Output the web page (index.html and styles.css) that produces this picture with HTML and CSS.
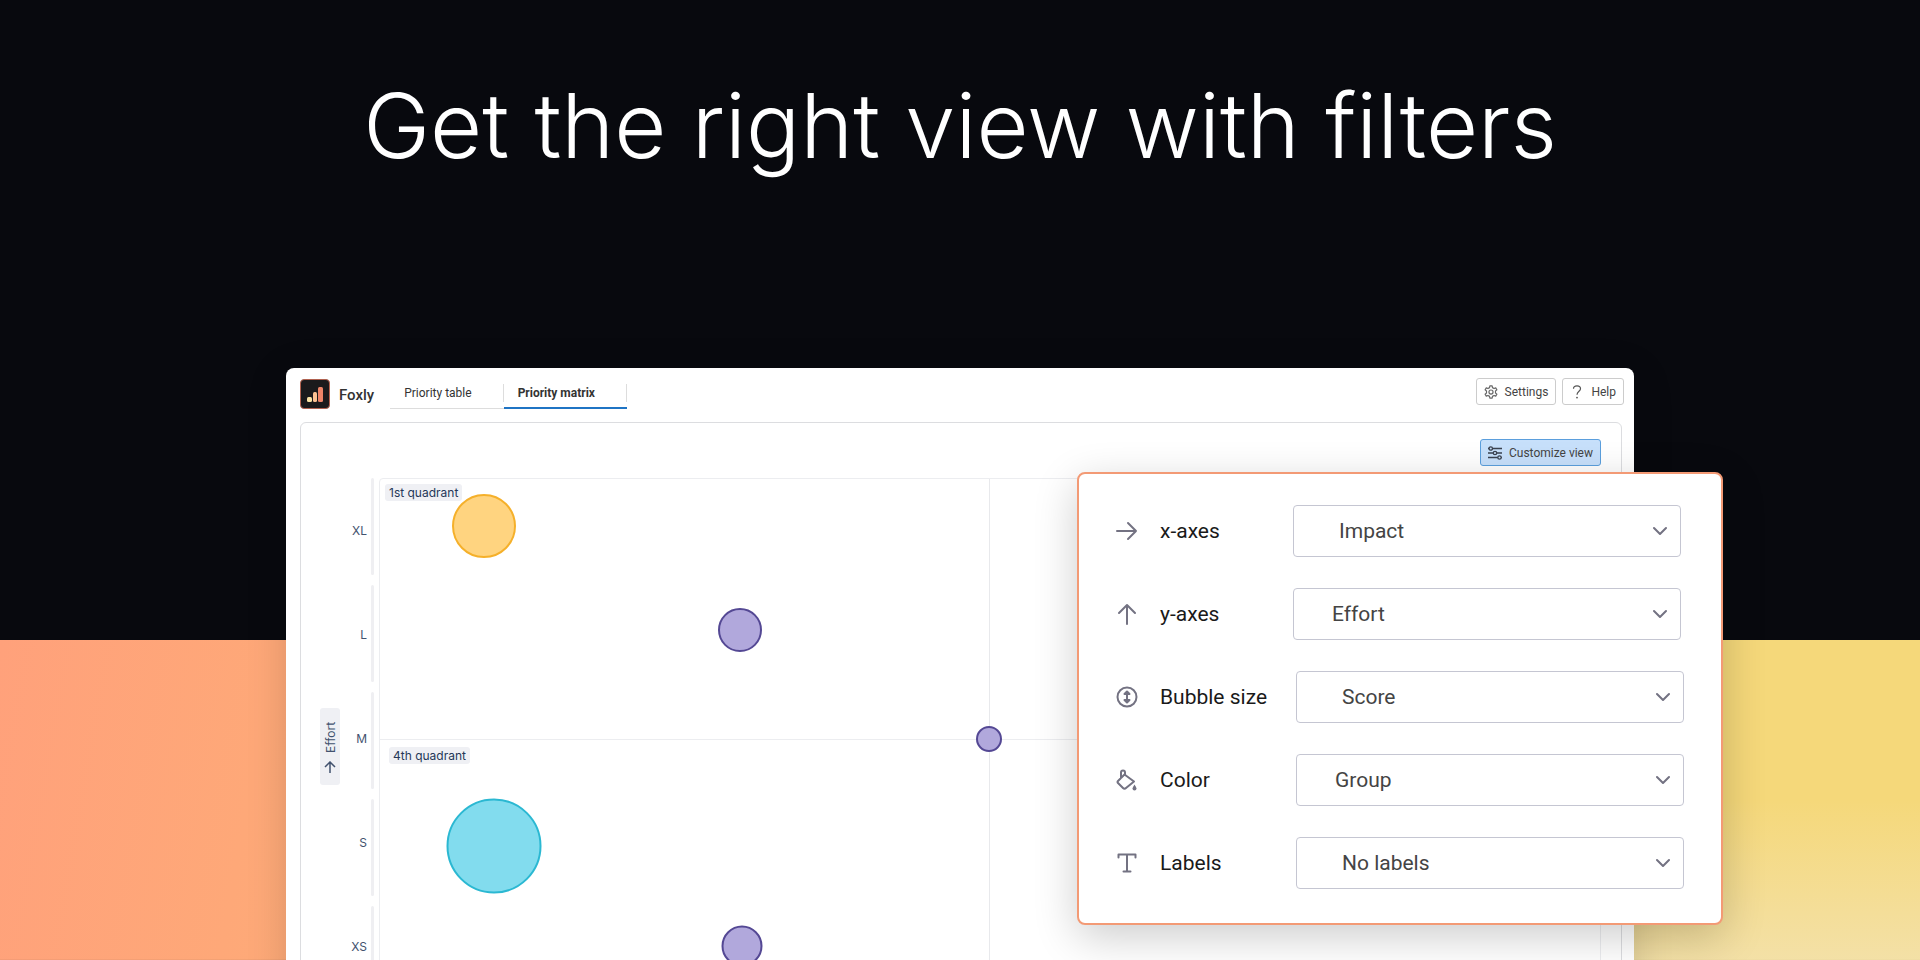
FILE: index.html
```html
<!DOCTYPE html>
<html lang="en">
<head>
    <meta charset="UTF-8">
    <meta name="viewport" content="width=device-width, initial-scale=1.0">
    <title>Foxly - Priority matrix</title>
    <link rel="stylesheet" href="styles.css">
</head>
<body>
    <header class="hero">
        <h1>Get the right view with filters</h1>
    </header>

    <main class="window">
        <!-- Top bar -->
        <div class="topbar">
            <svg class="logo" viewBox="0 0 30 30" aria-hidden="true">
                <rect x="0.5" y="0.5" width="29" height="29" rx="3.5" fill="#1b1a1c" stroke="#b0614f"/>
                <rect x="7" y="18" width="5" height="5" rx="1.5" fill="#fbe3a4"/>
                <rect x="13" y="13" width="4" height="10" rx="1.5" fill="#fbc193"/>
                <rect x="18" y="8" width="5" height="15" rx="1.5" fill="#ee8468"/>
            </svg>
            <span class="brand">Foxly</span>
            <nav class="tabs">
                <a href="#table">Priority table</a>
                <a href="#matrix" class="active">Priority matrix</a>
            </nav>
            <div class="actions">
                <button type="button" class="btn">
                    <svg width="14" height="14" viewBox="0 0 24 24" fill="none" stroke="#666" stroke-width="2" stroke-linejoin="round" aria-hidden="true">
                        <path d="M9.5 4.5 10 1.5h4l.5 3 2.7 1.6 2.9-1.1 2 3.4-2.4 2v3.2l2.4 2-2 3.4-2.9-1.1-2.7 1.6-.5 3h-4l-.5-3-2.7-1.6L3.900 19l-2-3.400 2.400-2v-3.200l-2.400-2L3.900 5l2.900 1.100z"/>
                        <circle cx="12" cy="12" r="3.5"/>
                    </svg>
                    Settings
                </button>
                <button type="button" class="btn">
                    <svg width="14" height="14" viewBox="0 0 14 14" fill="none" stroke="#555" stroke-width="1.2" aria-hidden="true">
                        <path d="M3.5 3.8C3.5 1.8 5 .8 7 .8s3.5 1.2 3.5 3C10.5 6.2 7 6.4 7 9.8"/>
                        <circle cx="7" cy="12.6" r=".9" fill="#555" stroke="none"/>
                    </svg>
                    Help
                </button>
            </div>
        </div>

        <!-- Matrix -->
        <section class="board">
            <div class="toolbar">
                <button type="button" class="btn btn-primary">
                    <svg width="14" height="14" viewBox="0 0 14 14" fill="none" stroke="#3a4250" stroke-width="1.3" aria-hidden="true">
                        <path d="M0 2.5h1M4.6 2.5H14M0 7h5.2M8.8 7H14M0 11.5h9.8M13.2 11.5h.8"/>
                        <circle cx="2.8" cy="2.5" r="1.7"/>
                        <circle cx="7" cy="7" r="1.7"/>
                        <circle cx="11.5" cy="11.5" r="1.7"/>
                    </svg>
                    Customize view
                </button>
            </div>
            <div class="chart">
                <div class="axis-title">
                    <span>
                        <svg width="12" height="12" viewBox="0 0 12 12" fill="none" stroke="#42526e" stroke-width="1.5" aria-hidden="true">
                            <path d="M6 0v11M1 6l5 5 5-5"/>
                        </svg>
                        Effort
                    </span>
                </div>
                <ul class="axis-labels">
                    <li>XL</li>
                    <li>L</li>
                    <li>M</li>
                    <li>S</li>
                    <li>XS</li>
                </ul>
                <div class="axis-bars">
                    <i></i><i></i><i></i><i></i><i></i>
                </div>
                <div class="plot">
                    <div class="quadrant"><span>1st quadrant</span></div>
                    <div class="quadrant"></div>
                    <div class="quadrant lower"><span>4th quadrant</span></div>
                    <div class="quadrant lower"></div>
                    <div class="bubble yellow" style="left: 8.5%; top: 9%; width: 64px"></div>
                    <div class="bubble purple" style="left: 29.5%; top: 29%; width: 44px"></div>
                    <div class="bubble purple" style="left: 49.9%; top: 50%; width: 26px"></div>
                    <div class="bubble cyan" style="left: 9.35%; top: 70.6%; width: 95px"></div>
                    <div class="bubble purple" style="left: 29.7%; top: 89.8%; width: 41px"></div>
                </div>
            </div>
        </section>

        <!-- Filters -->
        <form class="filters">
            <div class="field axis">
                <svg width="22" height="22" viewBox="0 0 22 22" aria-hidden="true"><path d="M1 11h19M12 3l8 8-8 8"/></svg>
                <label for="x-axes">x-axes</label>
                <div class="select">
                    <select id="x-axes"><option>Impact</option><option>Effort</option></select>
                    <svg width="14" height="10" viewBox="0 0 14 10" aria-hidden="true"><path d="M1 2l6 6 6-6"/></svg>
                </div>
            </div>
            <div class="field axis">
                <svg width="22" height="22" viewBox="0 0 22 22" aria-hidden="true"><path d="M11 21V2M3 10l8-8 8 8"/></svg>
                <label for="y-axes">y-axes</label>
                <div class="select tight">
                    <select id="y-axes"><option>Effort</option><option>Impact</option></select>
                    <svg width="14" height="10" viewBox="0 0 14 10" aria-hidden="true"><path d="M1 2l6 6 6-6"/></svg>
                </div>
            </div>
            <div class="field">
                <svg width="22" height="22" viewBox="0 0 22 22" aria-hidden="true"><circle cx="11" cy="11" r="9.5"/><path d="M11 6v10M8.500 8 11 5.500 13.500 8zM8.500 14l2.500 2.500 2.500-2.500z"/></svg>
                <label for="size">Bubble size</label>
                <div class="select">
                    <select id="size"><option>Score</option></select>
                    <svg width="14" height="10" viewBox="0 0 14 10" aria-hidden="true"><path d="M1 2l6 6 6-6"/></svg>
                </div>
            </div>
            <div class="field">
                <svg width="22" height="22" viewBox="0 0 22 22" aria-hidden="true"><path d="M8.500 5.500 2 12q-1 1 0 2l5 5q1.500 1.500 3 0l8-6.500zM5 9V3.500Q5 1.500 7 1.500T9 3.500V6"/><path class="drop" d="M18.500 15.500q-2 3-2 4a2 2 0 0 0 4 0q0-1-2-4z"/></svg>
                <label for="color">Color</label>
                <div class="select tight">
                    <select id="color"><option>Group</option></select>
                    <svg width="14" height="10" viewBox="0 0 14 10" aria-hidden="true"><path d="M1 2l6 6 6-6"/></svg>
                </div>
            </div>
            <div class="field">
                <svg width="22" height="22" viewBox="0 0 22 22" aria-hidden="true"><path d="M2.500 5.500v-3h17v3M11 2.500v17M7.500 19.500h7"/></svg>
                <label for="labels">Labels</label>
                <div class="select">
                    <select id="labels"><option>No labels</option></select>
                    <svg width="14" height="10" viewBox="0 0 14 10" aria-hidden="true"><path d="M1 2l6 6 6-6"/></svg>
                </div>
            </div>
        </form>
    </main>
</body>
</html>
```
FILE: styles.css
```css
* {
    box-sizing: border-box;
}

body {
    margin: 0;
    height: 100vh;
    overflow: hidden;
    font-family: Roboto, sans-serif;
    color: #333;
    background-color: #08090e;
    background-image:
        linear-gradient(to top, rgba(243, 228, 185, 0.7), rgba(243, 228, 185, 0) 50%),
        linear-gradient(100deg, #ffa17b 0%, #fea878 14%, #f9c07a 50%, #f5d87a 84%, #f5d87a 100%);
    background-size: 20% 33.33%, 100% 33.33%;
    background-position: right bottom;
    background-repeat: no-repeat;
}

.hero {
    height: 368px;
    padding-top: 66px;
    text-align: center;
}

.hero h1 {
    margin: 0;
    font-family: Inter, sans-serif;
    font-size: 90px;
    font-weight: 300;
    line-height: 120px;
    color: #fff;
}

/* App window */
.window {
    position: relative;
    margin: 0 286px;
    padding: 10px 10px 0 14px;
    background: #fff;
    border-radius: 8px;
    box-shadow: 0 8px 40px rgba(0, 0, 0, 0.15);
}

.topbar {
    display: flex;
    align-items: flex-start;
    height: 44px;
}

.logo {
    width: 30px;
    height: 30px;
    margin-top: 1px;
}

.brand {
    margin: 0 16px 0 9px;
    font-size: 15px;
    font-weight: 500;
    line-height: 34px;
}

.tabs {
    display: flex;
    padding-top: 6px;
}

.tabs a {
    padding: 0 32px 0 14px;
    border-bottom: 1px solid #ddd;
    font-size: 12px;
    line-height: 19px;
    height: 25px;
    color: #333;
    text-decoration: none;
    background: linear-gradient(#ddd, #ddd) right top / 1px 18px no-repeat;
}

.tabs a.active {
    border-bottom: 2px solid #1f74c4;
    font-weight: 700;
}

.actions {
    display: flex;
    gap: 6px;
    margin-left: auto;
}

.btn {
    display: flex;
    align-items: center;
    gap: 7px;
    height: 27px;
    padding: 0 7px;
    border: 1px solid #ccc;
    border-radius: 3px;
    background: #fff;
    font-family: Roboto, sans-serif;
    font-size: 12px;
    color: #444;
}

.btn-primary {
    border-color: #5b9fdd;
    background: #c7e0fb;
}

/* Matrix */
.board {
    margin-right: 2px;
    padding: 16px 20px 0 16px;
    border: 1px solid #dcdde0;
    border-radius: 6px;
}

.toolbar {
    display: flex;
    justify-content: flex-end;
    height: 39px;
}

.chart {
    display: flex;
    font-family: Inter, sans-serif;
    font-size: 12px;
    color: #42526e;
}

.axis-title {
    display: flex;
    align-items: center;
    padding-top: 12px;
    margin-left: 3px;
}

.axis-title span {
    display: flex;
    align-items: center;
    gap: 8px;
    height: 77px;
    width: 20px;
    padding: 12px 0;
    writing-mode: vertical-rl;
    transform: rotate(180deg);
    background: #eff0f4;
    border-radius: 3px;
}

.axis-labels {
    width: 27px;
    margin: 0;
    padding: 1px 0 0;
    list-style: none;
    text-align: right;
}

.axis-labels li {
    line-height: 104px;
}

.axis-bars {
    display: flex;
    flex-direction: column;
    gap: 10px;
    margin: 0 5px 0 4px;
}

.axis-bars i {
    width: 3px;
    height: 97px;
    border-radius: 2px;
    background: #efeff2;
}

.plot {
    position: relative;
    flex: 1;
    display: grid;
    grid-template-columns: 1fr 1fr;
    grid-template-rows: 260px 260px;
    align-self: flex-start;
    border: 1px solid #ecedf0;
    border-radius: 4px;
}

.quadrant {
    padding: 5px;
}

.quadrant:nth-child(odd) {
    border-right: 1px solid #e8e9ec;
}

.quadrant.lower {
    padding: 7px 9px;
    border-top: 1px solid #ecedf0;
}

.quadrant span {
    display: inline-block;
    padding: 0 4px;
    border-radius: 3px;
    background: #eff0f4;
    line-height: 17px;
    color: #253858;
}

.bubble {
    position: absolute;
    aspect-ratio: 1;
    border: 2px solid;
    border-radius: 50%;
    transform: translate(-50%, -50%);
}

.yellow {
    background: #ffd480;
    border-color: #f5b02a;
}

.purple {
    background: #b1a8dc;
    border-color: #544894;
}

.cyan {
    background: #82dcee;
    border-color: #2bb8d2;
}

/* Filters panel */
.filters {
    position: absolute;
    top: 104px;
    right: -89px;
    width: 646px;
    display: flex;
    flex-direction: column;
    gap: 31px;
    padding: 31px 37px 34px;
    border: 2px solid #f39a75;
    border-radius: 8px;
    background: #fff;
    box-shadow: 0 12px 44px rgba(0, 0, 0, 0.2);
}

.field {
    display: grid;
    grid-template-columns: 22px 114px 388px;
    column-gap: 22px;
    align-items: center;
    font-size: 21px;
    color: #1a1a1a;
}

.field.axis {
    grid-template-columns: 22px 111px 388px;
}

.field svg {
    fill: none;
    stroke: #737282;
    stroke-width: 2;
    stroke-linecap: round;
    stroke-linejoin: round;
}

.field .drop {
    fill: #737282;
    stroke: none;
}

.select {
    display: grid;
    align-items: center;
}

.select select,
.select svg {
    grid-area: 1 / 1;
}

.select svg {
    justify-self: end;
    margin-right: 14px;
    pointer-events: none;
}

.select select {
    appearance: none;
    height: 52px;
    padding: 0 45px;
    border: 1px solid #c5c6d2;
    border-radius: 4px;
    background: #fff;
    font-family: Roboto, sans-serif;
    font-size: 21px;
    color: #444;
}

.select.tight select {
    padding-left: 38px;
}
```
